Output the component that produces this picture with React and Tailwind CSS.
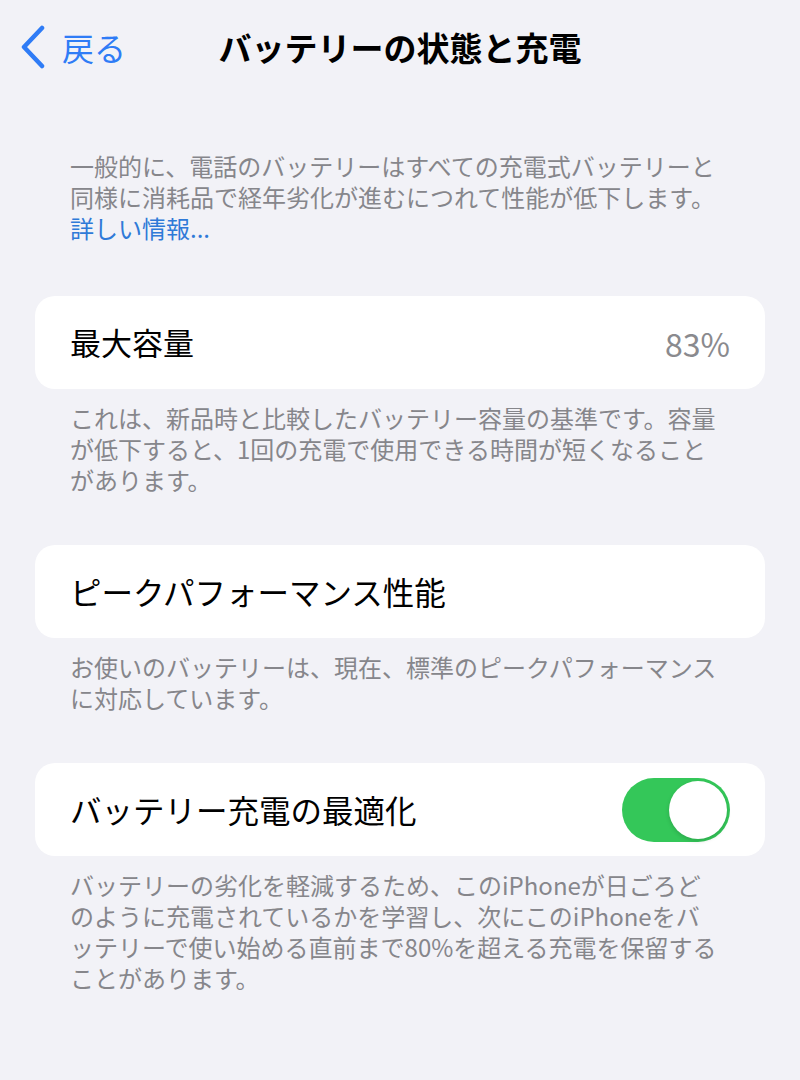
import React from 'react';

const font = { fontFamily: '"Noto Sans CJK JP", "Noto Sans", sans-serif' };

const Caption = ({ lines }) => (
    <p className="px-[70px] pt-[13px] text-[24px] leading-[31px] text-[#86868b] whitespace-nowrap">
        {lines.map((l, i) => (
            <span key={i} className="block">{l}</span>
        ))}
    </p>
);

const Card = ({ children }) => (
    <div className="mx-[35px] h-[93px] rounded-[20px] bg-white pl-[35px] pr-[35px] flex items-center justify-between">
        {children}
    </div>
);

const Toggle = () => (
    <div className="w-[108px] h-[64px] rounded-full bg-[#34c759] flex items-center justify-end pr-[3px]">
        <div className="w-[58px] h-[58px] rounded-full bg-white shadow-[0_2px_4px_rgba(0,0,0,0.15)]" />
    </div>
);

const App = () => {
    return (
        <div className="w-[800px] h-[1080px] bg-[#f2f2f7] overflow-hidden" style={font}>
            {/* Nav bar */}
            <div className="relative h-[94px] flex items-center">
                <div className="flex items-center pl-[20px] text-[#2f7cf6]">
                    <svg width="26" height="44" viewBox="0 0 26 44" fill="none">
                        <path d="M22 3 L4 22 L22 41" stroke="#2f7cf6" strokeWidth="4.5" strokeLinecap="round" strokeLinejoin="round" />
                    </svg>
                    <span className="ml-[16px] text-[32px] leading-none">戻る</span>
                </div>
                <h1 className="absolute left-0 right-0 text-center text-[33px] font-bold text-black leading-none">
                    バッテリーの状態と充電
                </h1>
            </div>

            {/* Intro */}
            <div className="pt-[56px] px-[70px] text-[24px] leading-[31px] text-[#86868b] whitespace-nowrap">
                <span className="block">一般的に、電話のバッテリーはすべての充電式バッテリーと</span>
                <span className="block">同様に消耗品で経年劣化が進むにつれて性能が低下します。</span>
                <span className="block text-[#2f7ad8]">詳しい情報...</span>
            </div>

            <div className="mt-[53px]">
                <Card>
                    <span className="text-[31px] text-black">最大容量</span>
                    <span className="text-[32px] text-[#8a8a8e]">83%</span>
                </Card>
                <Caption lines={[
                    'これは、新品時と比較したバッテリー容量の基準です。容量',
                    'が低下すると、1回の充電で使用できる時間が短くなること',
                    'があります。',
                ]} />
            </div>

            <div className="mt-[50px]">
                <Card>
                    <span className="text-[31.5px] text-black">ピークパフォーマンス性能</span>
                </Card>
                <Caption lines={[
                    'お使いのバッテリーは、現在、標準のピークパフォーマンス',
                    'に対応しています。',
                ]} />
            </div>

            <div className="mt-[50px]">
                <Card>
                    <span className="text-[31.5px] text-black">バッテリー充電の最適化</span>
                    <Toggle />
                </Card>
                <Caption lines={[
                    'バッテリーの劣化を軽減するため、このiPhoneが日ごろど',
                    'のように充電されているかを学習し、次にこのiPhoneをバ',
                    'ッテリーで使い始める直前まで80%を超える充電を保留する',
                    'ことがあります。',
                ]} />
            </div>
        </div>
    );
};

export default App;
